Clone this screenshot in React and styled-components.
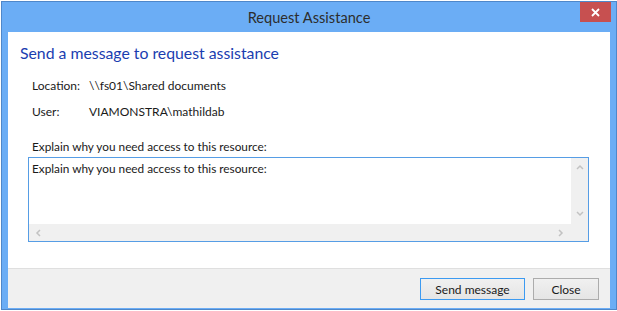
import React from 'react';
import styled, { createGlobalStyle } from 'styled-components';

const GlobalStyle = createGlobalStyle`
  html, body {
    margin: 0;
    padding: 0;
    background: #ffffff;
  }
  body {
    width: 617px;
    height: 311px;
    overflow: hidden;
    font-family: Lato, "Open Sans", "Liberation Sans", sans-serif;
  }
`;

const Window = styled.div`
  box-sizing: border-box;
  margin: 1px 0 0 1px;
  width: 616px;
  height: 309px;
  border: 1px solid #4f87c9;
  background: #6badf5;
  display: flex;
  flex-direction: column;
  padding: 0 6px 1px 6px;
`;

const TitleBar = styled.div`
  height: 30px;
  display: grid;
  grid-template-columns: 1fr auto 1fr;
  align-items: start;
  margin: 0 -6px;
`;

const Title = styled.div`
  grid-column: 2;
  font-size: 14.6px;
  line-height: 20px;
  margin-top: 6px;
  color: #2d2d2d;
`;

const CloseButton = styled.div`
  grid-column: 3;
  justify-self: end;
  width: 31px;
  height: 20px;
  margin-right: 5px;
  background: #c75050;
  display: flex;
  align-items: center;
  justify-content: center;
`;

const Client = styled.div`
  flex: 1;
  background: #ffffff;
  display: flex;
  flex-direction: column;
`;

const Body = styled.div`
  flex: 1;
  padding: 10px 20px 0 12px;
`;

const Heading = styled.div`
  font-size: 15.8px;
  line-height: 22px;
  color: #1a3db0;
`;

const InfoList = styled.div`
  margin-top: 13px;
  padding-left: 12px;
  display: grid;
  grid-template-columns: 57px auto;
  row-gap: 9px;
  font-size: 12px;
  line-height: 17px;
  color: #1a1a1a;
`;

const Prompt = styled.div`
  margin-top: 18px;
  padding-left: 12px;
  font-size: 11.8px;
  line-height: 17px;
  color: #1a1a1a;
`;

const TextBox = styled.div`
  box-sizing: border-box;
  margin: 2px 0 0 8px;
  width: 561px;
  height: 85px;
  border: 1px solid #569de5;
  display: grid;
  grid-template-columns: 1fr 17px;
  grid-template-rows: 1fr 17px;
`;

const TextContent = styled.div`
  padding: 2px 3px;
  font-size: 11.8px;
  line-height: 17px;
  color: #1a1a1a;
`;

const ScrollTrack = styled.div`
  background: #f0f0f0;
  display: flex;
  flex-direction: ${({ $vertical }) => ($vertical ? 'column' : 'row')};
  align-items: center;
  justify-content: space-between;
  padding: ${({ $vertical }) => ($vertical ? '6px 0' : '0 6px')};
`;

const Corner = styled.div`
  background: #f0f0f0;
`;

const Footer = styled.div`
  height: 40px;
  box-sizing: border-box;
  border-top: 1px solid #dfdfdf;
  background: #f0f0f0;
  display: flex;
  justify-content: flex-end;
  align-items: flex-start;
  gap: 8px;
  padding: 9px 11px 0 0;
`;

const Button = styled.div`
  box-sizing: border-box;
  width: ${({ $width }) => $width}px;
  height: 22px;
  border: 1px solid ${({ $default }) => ($default ? '#3c9af1' : '#acacac')};
  background: linear-gradient(#f0f0f0, #e5e5e5);
  display: flex;
  align-items: center;
  justify-content: center;
  font-size: 12px;
  color: #1a1a1a;
`;

function Chevron({ dir }) {
  const points = {
    up: '1,5 4,2 7,5',
    down: '1,2 4,5 7,2',
    left: '5,1 2,4 5,7',
    right: '2,1 5,4 2,7',
  }[dir];
  return (
    <svg width="8" height="8" viewBox="0 0 8 8">
      <polyline points={points} fill="none" stroke="#c2c2c2" strokeWidth="1.5" />
    </svg>
  );
}

export default function App() {
  return (
    <>
      <GlobalStyle />
      <Window>
        <TitleBar>
          <Title>Request Assistance</Title>
          <CloseButton>
            <svg width="9" height="9" viewBox="0 0 9 9">
              <path d="M1 1 L8 8 M8 1 L1 8" stroke="#ffffff" strokeWidth="1.8" />
            </svg>
          </CloseButton>
        </TitleBar>
        <Client>
          <Body>
            <Heading>Send a message to request assistance</Heading>
            <InfoList>
              <span>Location:</span>
              <span>\\fs01\Shared documents</span>
              <span>User:</span>
              <span>VIAMONSTRA\mathildab</span>
            </InfoList>
            <Prompt>Explain why you need access to this resource:</Prompt>
            <TextBox>
              <TextContent>Explain why you need access to this resource:</TextContent>
              <ScrollTrack $vertical>
                <Chevron dir="up" />
                <Chevron dir="down" />
              </ScrollTrack>
              <ScrollTrack>
                <Chevron dir="left" />
                <Chevron dir="right" />
              </ScrollTrack>
              <Corner />
            </TextBox>
          </Body>
          <Footer>
            <Button $width={105} $default>Send message</Button>
            <Button $width={66}>Close</Button>
          </Footer>
        </Client>
      </Window>
    </>
  );
}
